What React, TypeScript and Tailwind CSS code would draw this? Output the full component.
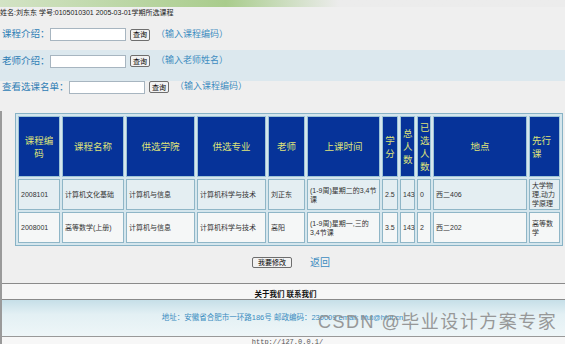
const cols = [42, 62, 69, 69, 37, 73, 16, 15, 14, 94, 31];

function QueryRow({ label, hint, inputLeft }: { label: string; hint: string; inputLeft: string }) {
  return (
    <div className="flex items-center">
      <span className={`${inputLeft} pl-[2px] text-[9.5px] text-[#2e7db5]`}>{label}</span>
      <input className="h-[13px] w-[76px] border border-[#a7b5c0] bg-white" />
      <button className="ml-[4px] flex h-[12px] w-[20px] items-center justify-center rounded-[2px] border border-[#6e6e6e] bg-[#f2f2f2] text-[7px] leading-none text-black">
        查询
      </button>
      <span className="ml-[6px] text-[9px] text-[#3d8cc0]">{hint}</span>
    </div>
  );
}

const rows = [
  {
    bg: "bg-[#e4eef2]",
    cells: ["2008101", "计算机文化基础", "计算机与信息", "计算机科学与技术", "刘正东"],
    time: ["(1-9周)星期二的3,4节", "课"],
    score: "2.5",
    total: "143",
    chosen: "0",
    place: "西二406",
    pre: ["大学物", "理,动力", "学原理"],
  },
  {
    bg: "bg-[#f5f7f7]",
    cells: ["2008001", "高等数学(上册)", "计算机与信息", "计算机科学与技术", "高阳"],
    time: ["(1-9周)星期一,三的", "3,4节课"],
    score: "3.5",
    total: "143",
    chosen: "2",
    place: "西二202",
    pre: ["高等数", "学"],
  },
];

export default function App() {
  const th = "border border-[#9cc4d6] bg-[#063399] px-[2px] text-[9.5px] font-normal leading-[13px] text-[#dfe37a]";
  const td = "border border-[#8fb6c7] px-[2px] text-left align-middle text-[7px] leading-[9px] text-[#333]";

  return (
    <div className="relative h-[344px] w-[565px] overflow-hidden bg-[#efefef] font-['Liberation_Sans','Noto_Sans_CJK_SC',sans-serif]">
      <div className="h-[7px] bg-gradient-to-r from-[#d3e3c5] via-[#a9cc8c] via-40% to-[#ececec] to-60%" />
      <p className="h-[12px] text-[7px] leading-[12px] text-[#222]">姓名:刘东东 学号:0105010301 2005-03-01学期所选课程</p>

      <div className="flex h-[31px] items-center">
        <QueryRow label="课程介绍：" hint="（输入课程编码）" inputLeft="w-[50px]" />
      </div>
      <div className="flex h-[31px] items-start bg-[#dce8ee] pt-[4px]">
        <QueryRow label="老师介绍：" hint="（输入老师姓名）" inputLeft="w-[50px]" />
      </div>
      <div className="flex h-[12px] items-center">
        <QueryRow label="查看选课名单：" hint="（输入课程编码）" inputLeft="w-[69px]" />
      </div>

      <div className="mt-[18px] border-l-2 border-[#9a9a9a]">
        <div className="pt-[2px] pl-[13px]">
          <table className="w-[548px] table-fixed border-separate border-spacing-[2px] border border-[#88b3c6] bg-[#d5e6ed]">
            <colgroup>
              {cols.map((w, i) => (
                <col key={i} style={{ width: w }} />
              ))}
            </colgroup>
            <thead>
              <tr className="h-[61px]">
                <th className={th}>课程编码</th>
                <th className={th}>课程名称</th>
                <th className={th}>供选学院</th>
                <th className={th}>供选专业</th>
                <th className={th}>老师</th>
                <th className={th}>上课时间</th>
                <th className={`${th} px-0`}>学分</th>
                <th className={`${th} px-0`}>总人数</th>
                <th className={`${th} px-0`}>已选人数</th>
                <th className={th}>地点</th>
                <th className={`${th} text-left`}>先行课</th>
              </tr>
            </thead>
            <tbody>
              {rows.map((r, i) => (
                <tr key={i} className="h-[31px]">
                  {r.cells.map((c, j) => (
                    <td key={j} className={`${td} ${r.bg}`}>
                      {c}
                    </td>
                  ))}
                  <td className={`${td} ${r.bg}`}>
                    {r.time[0]}
                    <br />
                    {r.time[1]}
                  </td>
                  <td className={`${td} ${r.bg}`}>{r.score}</td>
                  <td className={`${td} ${r.bg}`}>{r.total}</td>
                  <td className={`${td} ${r.bg}`}>{r.chosen}</td>
                  <td className={`${td} ${r.bg}`}>{r.place}</td>
                  <td className={`${td} ${r.bg} text-[7.5px]`}>
                    {r.pre.map((p, k) => (
                      <div key={k}>{p}</div>
                    ))}
                  </td>
                </tr>
              ))}
            </tbody>
          </table>
        </div>

        <div className="flex h-[38px] items-center border-b border-[#8a8a8a] pl-[250px] pb-[4px]">
          <button className="flex h-[11px] w-[40px] items-center justify-center rounded-[2px] border border-[#6e6e6e] bg-[#f2f2f2] text-[7px] leading-none text-black">
            我要修改
          </button>
          <a className="ml-[18px] text-[10px] text-[#3d8cc0]">返回</a>
        </div>

        <div className="flex h-[16px] items-end justify-center border-b border-[#8a8a8a] bg-[#f6f6f6] pl-[4px]">
          <span className="text-[7.5px] font-bold leading-[9px] text-[#111]">关于我们 联系我们</span>
        </div>
        <div className="flex h-[37px] items-center justify-center border-b border-[#999] bg-gradient-to-b from-[#c6dfe8] via-[#e3f0f4] via-40% to-[#eef6f8] pr-[2px]">
          <span className="text-[7.5px] text-[#3a8cc0]">地址：安徽省合肥市一环路186号 邮政编码：230009 email: hfut@hfut.cn</span>
        </div>
        <div className="flex h-[12px] justify-center bg-[#f7f7f7] pl-[8px]">
          <span className="font-['Liberation_Mono',monospace] text-[7px] leading-[10px] text-[#555]">http://127.0.0.1/</span>
        </div>
      </div>

      <div className="absolute left-[318px] top-[309px] text-[18px] leading-[26px] tracking-[1.5px] text-[#8f8f8f] opacity-90">
        CSDN @毕业设计方案专家
      </div>
    </div>
  );
}
